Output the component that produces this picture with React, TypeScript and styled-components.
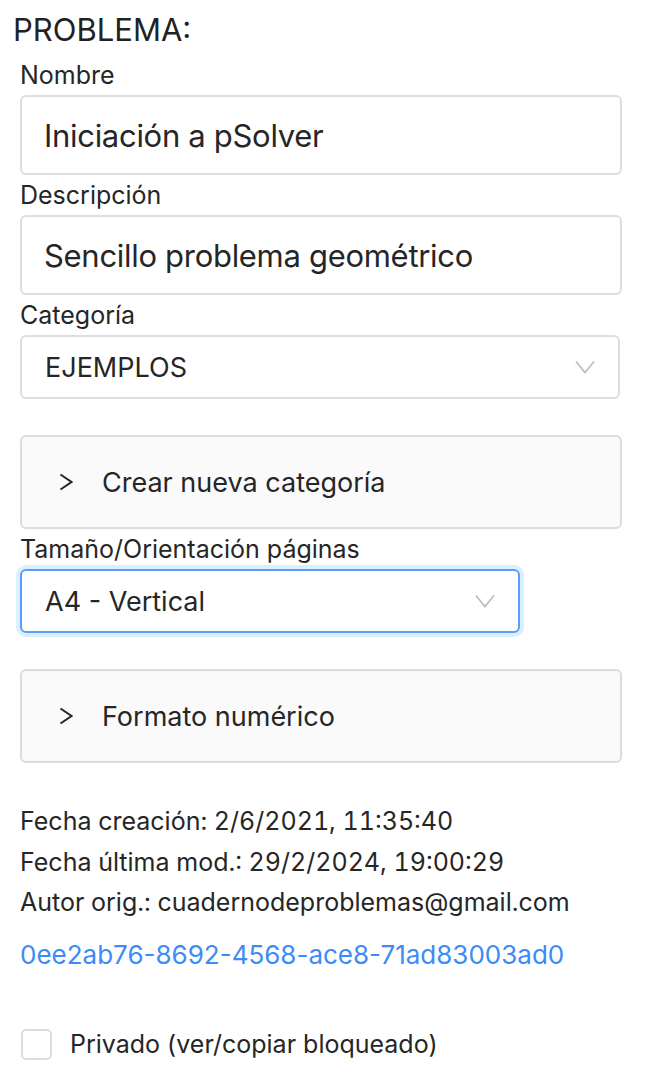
import React from 'react';
import styled, { createGlobalStyle } from 'styled-components';

const GlobalStyle = createGlobalStyle`
    body {
        margin: 0;
        background: #ffffff;
        font-family: Inter, "Noto Sans", "Liberation Sans", sans-serif;
        color: #262626;
    }
`;

const Page = styled.div`
    width: 646px;
    box-sizing: border-box;
    padding: 10px 24px 30px 20px;
    display: flex;
    flex-direction: column;
`;

const Title = styled.div`
    margin-left: -7px;
    font-size: 31px;
    line-height: 40px;
    color: #222222;
    margin-bottom: 12px;
`;

const Field = styled.div<{ $first?: boolean }>`
    display: flex;
    flex-direction: column;
    margin-top: ${({ $first }) => ($first ? '0' : '7px')};
`;

const Label = styled.label`
    font-size: 25px;
    line-height: 27px;
    margin-bottom: 6px;
    color: #262626;
`;

const TextInput = styled.input`
    height: 80px;
    box-sizing: border-box;
    border: 2px solid #dedede;
    border-radius: 6px;
    padding: 0 22px;
    font-family: inherit;
    font-size: 31px;
    letter-spacing: -0.3px;
    color: #262626;
    outline: none;
    background: #ffffff;
`;

const SelectBox = styled.div<{ $width: number; $focused?: boolean }>`
    width: ${({ $width }) => $width}px;
    height: 64px;
    box-sizing: border-box;
    display: flex;
    align-items: center;
    justify-content: space-between;
    padding: 0 23px 0 23px;
    border: 2px solid ${({ $focused }) => ($focused ? '#5b9ef7' : '#dedede')};
    border-radius: 6px;
    box-shadow: ${({ $focused }) => ($focused ? '0 0 0 4px rgba(5, 145, 255, 0.14)' : 'none')};
    font-size: 27px;
    color: #262626;
    background: #ffffff;
`;

const Collapse = styled.div`
    margin-top: 36px;
    height: 94px;
    box-sizing: border-box;
    display: flex;
    align-items: center;
    gap: 29px;
    padding-left: 37px;
    background: #fafafa;
    border: 2px solid #dcdcdc;
    border-radius: 6px;
    font-size: 27px;
    color: #262626;
`;

const Info = styled.div`
    margin-top: 38px;
    display: flex;
    flex-direction: column;
`;

const InfoLine = styled.div`
    font-size: 25px;
    line-height: 40.5px;
    font-variant-numeric: tabular-nums;
    color: #262626;
`;

const IdLink = styled.a`
    margin-top: 12px;
    font-size: 26px;
    line-height: 40px;
    color: #3b8cf6;
    text-decoration: none;
`;

const CheckRow = styled.label`
    margin-top: 54px;
    display: flex;
    align-items: center;
    gap: 18px;
    margin-left: 1px;
    font-size: 25px;
    color: #262626;
`;

const CheckSquare = styled.span`
    width: 31px;
    height: 31px;
    box-sizing: border-box;
    border: 2px solid #dcdcdc;
    border-radius: 5px;
    background: #ffffff;
`;

const DownArrow = () => (
    <svg width="20" height="14" viewBox="0 0 20 14">
        <polyline points="1,1.5 10,12.5 19,1.5" fill="none" stroke="#bfbfbf" strokeWidth="1.8" />
    </svg>
);

const RightArrow = () => (
    <svg width="14" height="18" viewBox="0 0 14 18">
        <polyline points="1.5,1.5 12.5,9 1.5,16.5" fill="none" stroke="#262626" strokeWidth="2" />
    </svg>
);

export default function App() {
    return (
        <>
            <GlobalStyle />
            <Page>
                <Title>PROBLEMA:</Title>
                <Field $first>
                    <Label>Nombre</Label>
                    <TextInput defaultValue="Iniciación a pSolver" />
                </Field>
                <Field>
                    <Label>Descripción</Label>
                    <TextInput defaultValue="Sencillo problema geométrico" />
                </Field>
                <Field>
                    <Label>Categoría</Label>
                    <SelectBox $width={600}>
                        <span>EJEMPLOS</span>
                        <DownArrow />
                    </SelectBox>
                </Field>
                <Collapse>
                    <RightArrow />
                    <span>Crear nueva categoría</span>
                </Collapse>
                <Field>
                    <Label>Tamaño/Orientación páginas</Label>
                    <SelectBox $width={500} $focused>
                        <span>A4 - Vertical</span>
                        <DownArrow />
                    </SelectBox>
                </Field>
                <Collapse>
                    <RightArrow />
                    <span>Formato numérico</span>
                </Collapse>
                <Info>
                    <InfoLine>Fecha creación: 2/6/2021, 11:35:40</InfoLine>
                    <InfoLine>Fecha última mod.: 29/2/2024, 19:00:29</InfoLine>
                    <InfoLine>Autor orig.: cuadernodeproblemas@gmail.com</InfoLine>
                    <IdLink href="#">0ee2ab76-8692-4568-ace8-71ad83003ad0</IdLink>
                </Info>
                <CheckRow>
                    <CheckSquare />
                    <span>Privado (ver/copiar bloqueado)</span>
                </CheckRow>
            </Page>
        </>
    );
}
